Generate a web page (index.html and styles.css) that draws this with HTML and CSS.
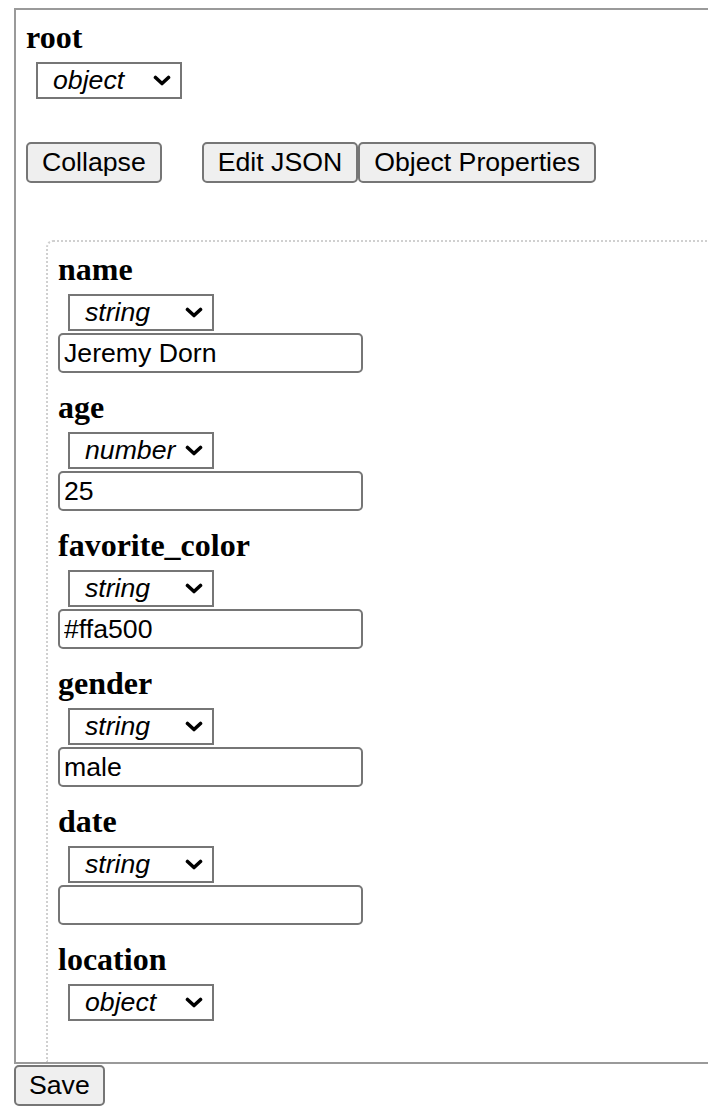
FILE: index.html
```html
<!DOCTYPE html>
<html>
<head>
<meta charset="utf-8">
<link rel="stylesheet" href="styles.css">
</head>
<body>
<div class="editor">
  <h3 class="title">root</h3>
  <div class="select"><span>object</span><svg class="chev" width="18" height="11" viewBox="0 0 18 11"><path d="M2.5 2.5 L9 8.5 L15.5 2.5" fill="none" stroke="#000" stroke-width="3.6" stroke-linecap="round" stroke-linejoin="round"/></svg></div>
  <div class="btnrow">
    <button class="btn collapse">Collapse</button><span class="grp"><button class="btn">Edit JSON</button><button class="btn props">Object Properties</button></span>
  </div>
  <div class="well">
    <div class="field">
      <h3 class="title">name</h3>
      <div class="select"><span>string</span><svg class="chev" width="18" height="11" viewBox="0 0 18 11"><path d="M2.5 2.5 L9 8.5 L15.5 2.5" fill="none" stroke="#000" stroke-width="3.6" stroke-linecap="round" stroke-linejoin="round"/></svg></div>
      <input class="input" type="text" value="Jeremy Dorn">
    </div>
    <div class="field">
      <h3 class="title">age</h3>
      <div class="select"><span>number</span><svg class="chev" width="18" height="11" viewBox="0 0 18 11"><path d="M2.5 2.5 L9 8.5 L15.5 2.5" fill="none" stroke="#000" stroke-width="3.6" stroke-linecap="round" stroke-linejoin="round"/></svg></div>
      <input class="input" type="text" value="25">
    </div>
    <div class="field">
      <h3 class="title">favorite_color</h3>
      <div class="select"><span>string</span><svg class="chev" width="18" height="11" viewBox="0 0 18 11"><path d="M2.5 2.5 L9 8.5 L15.5 2.5" fill="none" stroke="#000" stroke-width="3.6" stroke-linecap="round" stroke-linejoin="round"/></svg></div>
      <input class="input" type="text" value="#ffa500">
    </div>
    <div class="field">
      <h3 class="title">gender</h3>
      <div class="select"><span>string</span><svg class="chev" width="18" height="11" viewBox="0 0 18 11"><path d="M2.5 2.5 L9 8.5 L15.5 2.5" fill="none" stroke="#000" stroke-width="3.6" stroke-linecap="round" stroke-linejoin="round"/></svg></div>
      <input class="input" type="text" value="male">
    </div>
    <div class="field">
      <h3 class="title">date</h3>
      <div class="select"><span>string</span><svg class="chev" width="18" height="11" viewBox="0 0 18 11"><path d="M2.5 2.5 L9 8.5 L15.5 2.5" fill="none" stroke="#000" stroke-width="3.6" stroke-linecap="round" stroke-linejoin="round"/></svg></div>
      <input class="input" type="text" value="">
    </div>
    <div class="field last">
      <h3 class="title">location</h3>
      <div class="select"><span>object</span><svg class="chev" width="18" height="11" viewBox="0 0 18 11"><path d="M2.5 2.5 L9 8.5 L15.5 2.5" fill="none" stroke="#000" stroke-width="3.6" stroke-linecap="round" stroke-linejoin="round"/></svg></div>
    </div>
  </div>
</div>
<button class="btn save">Save</button>
</body>
</html>
```

FILE: styles.css
```css
html, body {
  margin: 0;
  padding: 0;
  background: #fff;
}
body {
  font-family: "Liberation Sans", Arial, sans-serif;
  font-size: 26.67px;
  color: #000;
}
.editor {
  margin: 8px 0 0 14px;
  border: 2px solid #9a9a9a;
  border-right: none;
  padding: 9px 0 0 10px;
}
.title {
  margin: 0;
  font-family: "Liberation Serif", "Times New Roman", serif;
  font-weight: bold;
  font-size: 32px;
  line-height: 37px;
  height: 37px;
}
.select {
  margin: 6px 0 0 10px;
  width: 146px;
  height: 37px;
  box-sizing: border-box;
  border: 2px solid #767676;
  background: #fff;
  display: flex;
  align-items: center;
  justify-content: space-between;
  padding: 0 9px 0 15px;
  font-style: italic;
  font-size: 26.67px;
}
.chev {
  display: block;
}
.btnrow {
  margin-top: 43px;
  display: flex;
  align-items: flex-start;
}
.grp {
  display: flex;
  margin-left: 40px;
}
.btn {
  font-family: "Liberation Sans", Arial, sans-serif;
  font-size: 26.67px;
  height: 41px;
  box-sizing: border-box;
  padding: 0 14px;
  margin: 0;
  background: #efefef;
  border: 2px solid #767676;
  border-radius: 5px;
  color: #000;
  line-height: 1;
}
.props {
  margin-left: 0;
}
.well {
  margin: 57px 0 0 20px;
  border: 2px dotted #d0d0d0;
  border-bottom: none;
  border-right: none;
  border-radius: 7px 0 0 0;
  padding: 9px 0 41px 10px;
}
.field {
  margin-bottom: 16px;
}
.field.last {
  margin-bottom: 0;
}
.input {
  display: block;
  margin: 2px 0 0 0;
  width: 305px;
  height: 40px;
  box-sizing: border-box;
  border: 2px solid #767676;
  border-radius: 5px;
  padding: 0 4px;
  font-family: "Liberation Sans", Arial, sans-serif;
  font-size: 26.67px;
  color: #000;
  background: #fff;
}
.save {
  display: block;
  margin: 1px 0 0 14px;
  padding: 0 13px;
}
```
